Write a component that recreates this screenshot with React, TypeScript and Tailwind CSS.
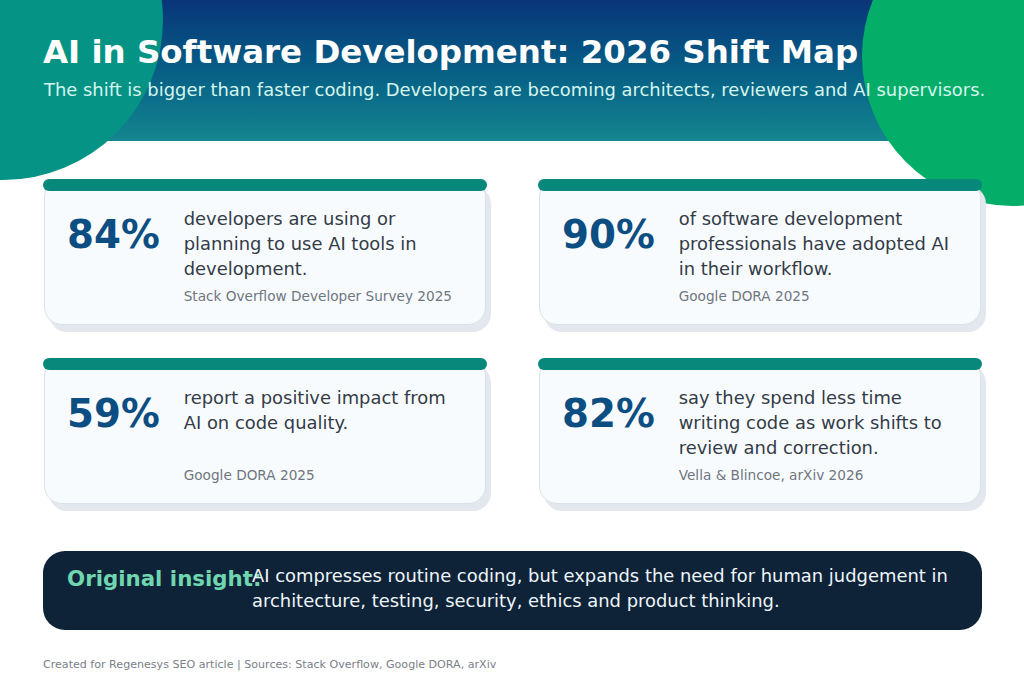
const stats = [
  { n: "84%", d: ["developers are using or", "planning to use AI tools in", "development."], s: "Stack Overflow Developer Survey 2025" },
  { n: "90%", d: ["of software development", "professionals have adopted AI", "in their workflow."], s: "Google DORA 2025" },
  { n: "59%", d: ["report a positive impact from", "AI on code quality.", "\u00a0"], s: "Google DORA 2025" },
  { n: "82%", d: ["say they spend less time", "writing code as work shifts to", "review and correction."], s: "Vella & Blincoe, arXiv 2026" },
];

export default function App() {
  return (
    <div className="relative w-[1024px] h-[683px] overflow-hidden bg-white font-['DejaVu_Sans',sans-serif]">
      <div className="absolute left-[-157px] top-[-140px] w-[320px] h-[320px] rounded-full bg-[#049384]" />
      <div className="absolute left-[862px] top-[-94px] w-[300px] h-[300px] rounded-full bg-[#04ae68]" />
      <header className="h-[141px] bg-gradient-to-b from-[#0a3579] to-[#15868f] pl-[43px] pt-[32px]">
        <h1 className="relative text-[32.45px] leading-[40px] font-bold text-white whitespace-nowrap">
          AI in Software Development: 2026 Shift Map
        </h1>
        <p className="relative mt-[6px] ml-px text-[17.92px] leading-[24px] text-[#d6f5ef] whitespace-nowrap">
          The shift is bigger than faster coding. Developers are becoming architects, reviewers and AI supervisors.
        </p>
      </header>
      <main className="relative pl-[43px] pr-[42px] pt-[38px]">
        <div className="grid grid-cols-2 gap-x-[51px] gap-y-[33px]">
          {stats.map((c) => (
            <div
              key={c.n}
              className="relative mx-px h-[146px] rounded-[18px] border border-[#dae1e8] bg-[#f8fbfe] shadow-[5px_7px_0_#e3e8ee] pl-[22px] pt-[28px] flex"
            >
              <div className="absolute -inset-x-[2px] -top-px h-[12px] rounded-[6px] bg-[#08887a]" />
              <div className="w-[116.7px] shrink-0 text-[38.75px] leading-[54px] font-bold text-[#0c4e82]">{c.n}</div>
              <div className="-mt-[1px]">
                <p className="text-[17.92px] leading-[24.8px] text-[#333c47] whitespace-nowrap">
                  {c.d.map((l, i) => (
                    <span key={i} className="block">{l}</span>
                  ))}
                </p>
                <p className="mt-[5px] text-[13.65px] leading-[20px] text-[#6f767e] whitespace-nowrap">{c.s}</p>
              </div>
            </div>
          ))}
        </div>
        <section className="mt-[47px] h-[79px] rounded-[22px] bg-[#0f2338] flex pl-[24px] pt-[13px]">
          <div className="w-[185px] shrink-0 whitespace-nowrap pt-[1px] text-[21.33px] leading-[28px] font-bold text-[#6fd6b0]">
            Original insight:
          </div>
          <p className="text-[17.92px] leading-[24.8px] text-[#eef5f8] whitespace-nowrap">
            AI compresses routine coding, but expands the need for human judgement in
            <br />
            architecture, testing, security, ethics and product thinking.
          </p>
        </section>
        <footer className="mt-[28px] text-[11.09px] leading-[14px] text-[#7a8087] whitespace-nowrap">
          Created for Regenesys SEO article | Sources: Stack Overflow, Google DORA, arXiv
        </footer>
      </main>
    </div>
  );
}
